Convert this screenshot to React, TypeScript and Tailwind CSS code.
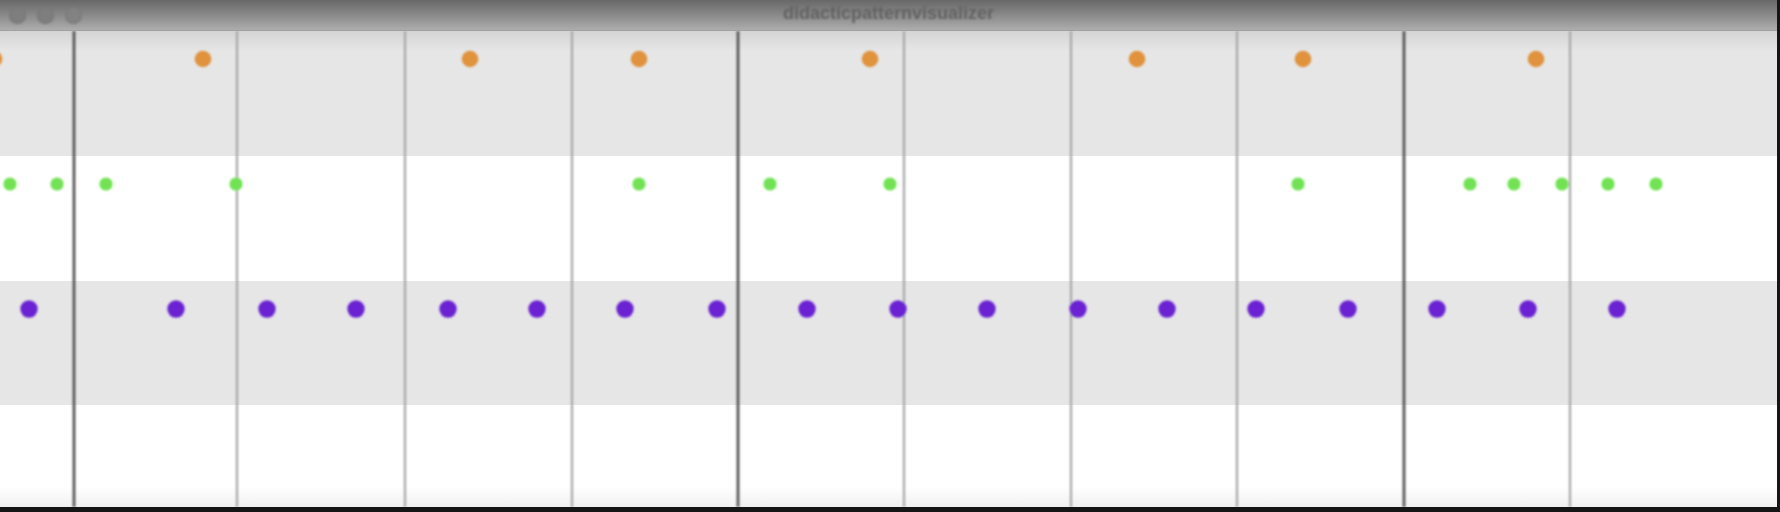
const lines = [74, 237, 405, 572, 738, 904, 1071, 1237, 1404, 1570];
const orange = [-6, 203, 470, 639, 870, 1137, 1303, 1536];
const green = [10, 57, 106, 236, 639, 770, 890, 1298, 1470, 1514, 1562, 1608, 1656];
const purple = [29, 176, 267, 356, 448, 537, 625, 717, 807, 898, 987, 1078, 1167, 1256, 1348, 1437, 1528, 1617];

function TitleBar() {
  return (
    <div className="relative flex h-[31px] items-center border-b border-[#a0a0a0] bg-gradient-to-b from-[#686868] to-[#adadad]">
      <div className="flex items-center gap-[11px] pl-[9px] blur-[0.8px]">
        <span className="h-[17px] w-[17px] rounded-full bg-[#7e7e7e] shadow-[inset_0_0_2px_#6c6c6c]" />
        <span className="h-[17px] w-[17px] rounded-full bg-[#7e7e7e] shadow-[inset_0_0_2px_#6c6c6c]" />
        <span className="h-[17px] w-[17px] rounded-full bg-[#828282] shadow-[inset_0_0_2px_#6c6c6c]" />
      </div>
      <div className="absolute inset-x-0 top-[1px] text-center font-['Liberation_Sans',Arial,sans-serif] text-[18px] font-bold leading-[24px] text-[#626262] blur-[0.9px]">
        didacticpatternvisualizer
      </div>
    </div>
  );
}

function Track() {
  return (
    <div className="relative flex-1">
      <div className="flex h-full flex-col">
        <div className="h-[125px] bg-[linear-gradient(to_bottom,#d4d4d4,#e6e6e6_16%)]" />
        <div className="h-[125px] bg-white" />
        <div className="h-[124px] bg-[#e6e6e6]" />
        <div className="flex-1 bg-[linear-gradient(to_bottom,#ffffff_80%,#f1f1f1)]" />
      </div>
      <svg className="absolute inset-0 h-full w-full" viewBox="0 0 1777 476" preserveAspectRatio="none">
        <defs>
          <filter id="soft" x="-50%" y="-50%" width="200%" height="200%">
            <feGaussianBlur stdDeviation="0.8" />
          </filter>
        </defs>
        <g filter="url(#soft)">
          {lines.map((x, i) => (
            <line
              key={x}
              x1={x}
              x2={x}
              y1={0}
              y2={476}
              stroke={i % 4 === 0 ? '#555555' : '#a6a6a6'}
              strokeWidth={i % 4 === 0 ? 2.8 : 2.2}
            />
          ))}
          {orange.map((x) => (
            <circle key={'o' + x} cx={x} cy={28} r={8.3} fill="#e0923c" />
          ))}
          {green.map((x) => (
            <circle key={'g' + x} cx={x} cy={153} r={6.6} fill="#72e254" />
          ))}
          {purple.map((x) => (
            <circle key={'p' + x} cx={x} cy={278} r={8.7} fill="#6a20d2" />
          ))}
        </g>
      </svg>
    </div>
  );
}

export default function App() {
  return (
    <div className="flex h-[512px] w-[1780px] overflow-hidden bg-[#151515]">
      <div className="flex w-[1777px] flex-col pb-[5px]">
        <TitleBar />
        <Track />
      </div>
    </div>
  );
}
